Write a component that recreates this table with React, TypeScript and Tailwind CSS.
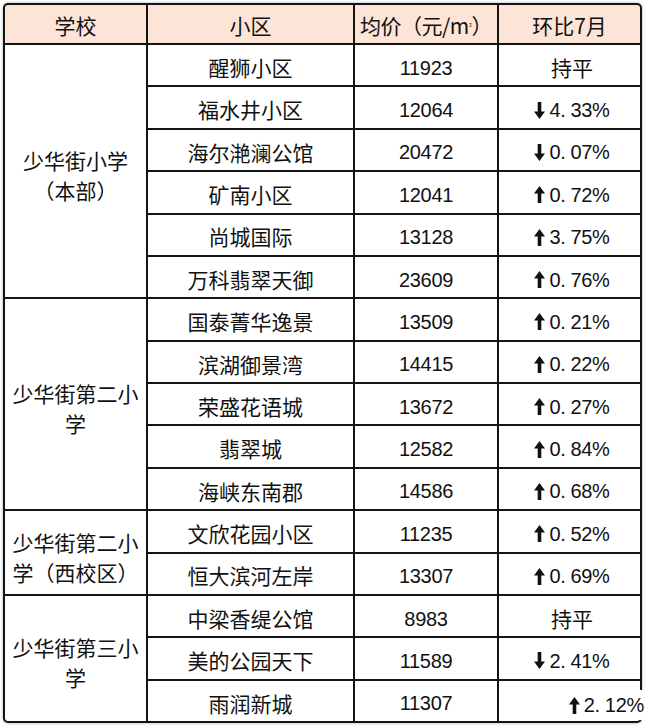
import React from "react";

const CN = { fontFamily: '"Noto Sans CJK SC", "Noto Sans", sans-serif' };
const NUM = { fontFamily: '"Liberation Sans", Arial, "Noto Sans CJK SC", sans-serif' };

type Row = { name: string; price: string; change: string };

const groups: { school: string[]; rows: Row[] }[] = [
  {
    school: ["少华街小学", "（本部）"],
    rows: [
      { name: "醒狮小区", price: "11923", change: "持平" },
      { name: "福水井小区", price: "12064", change: "-4.33%" },
      { name: "海尔滟澜公馆", price: "20472", change: "-0.07%" },
      { name: "矿南小区", price: "12041", change: "+0.72%" },
      { name: "尚城国际", price: "13128", change: "+3.75%" },
      { name: "万科翡翠天御", price: "23609", change: "+0.76%" },
    ],
  },
  {
    school: ["少华街第二小", "学"],
    rows: [
      { name: "国泰菁华逸景", price: "13509", change: "+0.21%" },
      { name: "滨湖御景湾", price: "14415", change: "+0.22%" },
      { name: "荣盛花语城", price: "13672", change: "+0.27%" },
      { name: "翡翠城", price: "12582", change: "+0.84%" },
      { name: "海峡东南郡", price: "14586", change: "+0.68%" },
    ],
  },
  {
    school: ["少华街第二小", "学（西校区）"],
    rows: [
      { name: "文欣花园小区", price: "11235", change: "+0.52%" },
      { name: "恒大滨河左岸", price: "13307", change: "+0.69%" },
    ],
  },
  {
    school: ["少华街第三小", "学"],
    rows: [
      { name: "中梁香缇公馆", price: "8983", change: "持平" },
      { name: "美的公园天下", price: "11589", change: "-2.41%" },
      { name: "雨润新城", price: "11307", change: "+2.12%" },
    ],
  },
];

const spanClass: Record<number, string> = {
  2: "row-span-2",
  3: "row-span-3",
  5: "row-span-5",
  6: "row-span-6",
};

function Arrow({ up }: { up: boolean }) {
  return (
    <svg width="11" height="17" viewBox="0 0 11 17" className="mr-[4px] shrink-0">
      {up ? (
        <polygon points="5.5,0 11,7.5 7.3,7.5 7.3,17 3.7,17 3.7,7.5 0,7.5" fill="#111" />
      ) : (
        <polygon points="5.5,17 11,9.5 7.3,9.5 7.3,0 3.7,0 3.7,9.5 0,9.5" fill="#111" />
      )}
    </svg>
  );
}

function Change({ v }: { v: string }) {
  if (v === "持平") {
    return (
      <span className="text-[21px] text-[#111]" style={CN}>
        持平
      </span>
    );
  }
  const up = v.startsWith("+");
  const num = v.slice(1);
  const [a, b] = num.split(".");
  return (
    <span className="flex items-center text-[20px] text-[#111] tracking-[-0.3px]" style={NUM}>
      <Arrow up={up} />
      <span>{a}</span>
      <span className="mr-[5px]">.</span>
      <span>{b}</span>
    </span>
  );
}

export default function App() {
  return (
    <div className="w-[645px] h-[727px] bg-white pt-[3px] pl-[3px]">
      <div className="grid w-[639px] h-[720px] grid-cols-[141px_205px_142px_141px] grid-rows-[38px_repeat(16,40.375px)] gap-[2px] p-[2px] bg-[#141414] rounded-[5px] shadow-[0_0_3px_rgba(0,0,0,0.35)]">
        {["学校", "小区", "均价（元/㎡）", "环比7月"].map((h, i) => (
          <div
            key={h}
            className={`flex items-center justify-center bg-[#fce4d6] pt-[4px] text-[21px] text-[#111] ${
              i === 0 ? "rounded-tl-[3px]" : i === 3 ? "rounded-tr-[3px]" : ""
            }`}
            style={CN}
          >
            {i === 2 ? (
              <span className="tracking-[-0.5px] whitespace-nowrap">
                均价（元/m<sup className="text-[8px]">²</sup>）
              </span>
            ) : (
              h
            )}
          </div>
        ))}
        {groups.map((g, gi) => (
          <React.Fragment key={gi}>
            {g.rows.map((r, ri) => {
              const isLast = gi === groups.length - 1 && ri === g.rows.length - 1;
              return (
                <React.Fragment key={r.name}>
                  {ri === 0 && (
                    <div
                      className={`${spanClass[g.rows.length]} flex flex-col items-center justify-center bg-white pt-[8px] text-[21px] leading-[30px] text-[#111] ${
                        gi === groups.length - 1 ? "rounded-bl-[3px]" : ""
                      }`}
                      style={CN}
                    >
                      {g.school.map((l) => (
                        <span key={l} className="block whitespace-nowrap">
                          {l}
                        </span>
                      ))}
                    </div>
                  )}
                  <div
                    className="flex items-center justify-center bg-white pt-[5px] text-[21px] text-[#111] whitespace-nowrap"
                    style={CN}
                  >
                    {r.name}
                  </div>
                  <div
                    className="flex items-center justify-center bg-white pt-[5px] text-[20px] text-[#111] tracking-[-0.3px]"
                    style={NUM}
                  >
                    {r.price}
                  </div>
                  {isLast ? (
                    <div className="relative flex items-end justify-end bg-white pb-[1px] rounded-br-[3px]">
                      <span className="relative z-10 mr-[-4px] bg-white">
                        <Change v={r.change} />
                      </span>
                    </div>
                  ) : (
                    <div className="flex items-center justify-center bg-white pt-[5px] pl-[5px]">
                      <Change v={r.change} />
                    </div>
                  )}
                </React.Fragment>
              );
            })}
          </React.Fragment>
        ))}
      </div>
    </div>
  );
}
